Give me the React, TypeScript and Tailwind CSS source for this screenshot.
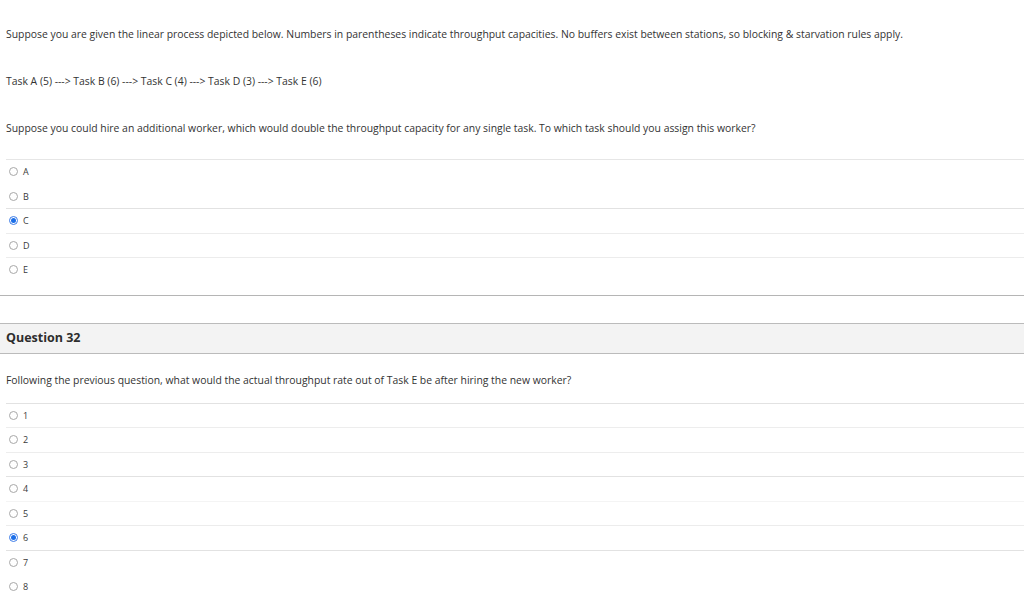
import React from "react";

const font = { fontFamily: '"Open Sans", "Liberation Sans", sans-serif' };

function Radio({ checked }: { checked?: boolean }) {
  return checked ? (
    <span className="flex h-[9px] w-[9px] items-center justify-center rounded-full border border-[#3b7be8] bg-white">
      <span className="h-[5px] w-[5px] rounded-full bg-[#1a6ee8]" />
    </span>
  ) : (
    <span className="h-[9px] w-[9px] rounded-full border border-[#a8a8a8] bg-white" />
  );
}

type Opt = { label: string; checked?: boolean; line: string };

function Options({ opts }: { opts: Opt[] }) {
  return (
    <div className="ml-[6px]">
      {opts.map((o, i) => (
        <div
          key={i}
          className={`flex h-[24.5px] items-center border-t ${o.line} pl-[3px]`}
        >
          <Radio checked={o.checked} />
          <span className="ml-[5px] text-[9px] text-[#3a3a3a]">{o.label}</span>
        </div>
      ))}
    </div>
  );
}

export default function App() {
  const q1: Opt[] = [
    { label: "A", line: "border-[#e6e6e6]" },
    { label: "B", line: "border-transparent" },
    { label: "C", checked: true, line: "border-[#e2e2e2]" },
    { label: "D", line: "border-[#ececec]" },
    { label: "E", line: "border-[#ececec]" },
  ];
  const q2: Opt[] = [
    { label: "1", line: "border-[#e2e2e2]" },
    { label: "2", line: "border-[#ededed]" },
    { label: "3", line: "border-[#ededed]" },
    { label: "4", line: "border-[#e2e2e2]" },
    { label: "5", line: "border-[#f4f4f4]" },
    { label: "6", checked: true, line: "border-[#ececec]" },
    { label: "7", line: "border-[#e2e2e2]" },
    { label: "8", line: "border-transparent" },
  ];
  return (
    <div className="h-[613px] w-[1024px] overflow-hidden bg-white text-[#333]" style={font}>
      <div className="px-[6px] pt-[27px]">
        <p className="text-[10.4px] leading-[14px]">
          Suppose you are given the linear process depicted below. Numbers in parentheses indicate throughput capacities. No buffers exist between stations, so blocking &amp; starvation rules apply.
        </p>
        <p className="mt-[33px] text-[10.4px] leading-[14px]">
          Task A (5) ---&gt; Task B (6) ---&gt; Task C (4) ---&gt; Task D (3) ---&gt; Task E (6)
        </p>
        <p className="mt-[33px] text-[10.4px] leading-[14px]">
          Suppose you could hire an additional worker, which would double the throughput capacity for any single task. To which task should you assign this worker?
        </p>
      </div>
      <div className="mt-[24px]">
        <Options opts={q1} />
      </div>
      <div className="mt-[13px] border-t border-[#b5b5b5]" />
      <div className="mt-[27px] flex h-[31px] items-center border-y border-[#bbbbbb] bg-[#f3f3f3] px-[6px]">
        <span className="text-[12.5px] font-bold text-[#2d2d2d]">Question 32</span>
      </div>
      <div className="px-[6px] pt-[19px]">
        <p className="text-[10.4px] leading-[14px]">
          Following the previous question, what would the actual throughput rate out of Task E be after hiring the new worker?
        </p>
      </div>
      <div className="mt-[16px]">
        <Options opts={q2} />
      </div>
    </div>
  );
}
